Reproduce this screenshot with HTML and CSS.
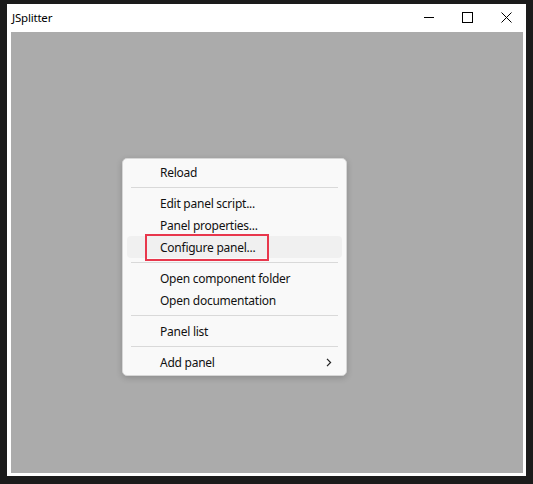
FILE: index.html
```html
<!DOCTYPE html>
<html lang="en">

<head>
    <meta charset="UTF-8">
    <meta name="viewport" content="width=device-width, initial-scale=1.0">
    <title>JSplitter</title>
    <link rel="stylesheet" href="styles.css">
</head>

<body>
    <div class="window">
        <div class="titlebar">
            <span class="title">JSplitter</span>
            <div class="controls">
                <div class="ctl">
                    <svg width="10" height="10" viewBox="0 0 10 10"><path d="M0 5.5h10" stroke="#000" stroke-width="1"/></svg>
                </div>
                <div class="ctl">
                    <svg width="11" height="11" viewBox="0 0 11 11"><rect x="0.5" y="0.5" width="10" height="10" fill="none" stroke="#000" stroke-width="1"/></svg>
                </div>
                <div class="ctl">
                    <svg width="11" height="11" viewBox="0 0 11 11"><path d="M0.5 0.5l10 10M10.5 0.5l-10 10" stroke="#000" stroke-width="1"/></svg>
                </div>
            </div>
        </div>

        <div class="client">
            <div class="menu">
                <div class="item">Reload</div>
                <div class="sep"></div>
                <div class="item">Edit panel script...</div>
                <div class="item">Panel properties...</div>
                <div class="item hover">
                    Configure panel...
                    <span class="mark"></span>
                </div>
                <div class="sep"></div>
                <div class="item">Open component folder</div>
                <div class="item">Open documentation</div>
                <div class="sep"></div>
                <div class="item">Panel list</div>
                <div class="sep"></div>
                <div class="item sub">
                    Add panel
                    <svg class="arrow" width="6" height="9" viewBox="0 0 6 9"><path d="M1 0.8l3.6 3.7L1 8.2" fill="none" stroke="#222" stroke-width="1.2"/></svg>
                </div>
            </div>
        </div>
    </div>
</body>

</html>
```

FILE: styles.css
```css
* {
    margin: 0;
    padding: 0;
    box-sizing: border-box;
}

body {
    font-family: 'Noto Sans', 'Open Sans', sans-serif;
    background-color: #1b1b1b;
    height: 484px;
    overflow: hidden;
}

.window {
    margin: 4px 0 0 7px;
    width: 519px;
    height: 472px;
    background-color: #fff;
    display: flex;
    flex-direction: column;
}

.titlebar {
    height: 28px;
    display: flex;
    align-items: center;
    justify-content: space-between;
}

.title {
    font-size: 11.5px;
    letter-spacing: -0.2px;
    color: #000;
    padding-left: 5px;
    padding-bottom: 2px;
}

.controls {
    display: flex;
    height: 100%;
}

.ctl {
    width: 39px;
    display: flex;
    align-items: center;
    justify-content: center;
    padding-bottom: 2px;
}

.client {
    flex: 1;
    margin: 0 3px 3px 4px;
    background-color: #ababab;
    position: relative;
}

.menu {
    position: absolute;
    left: 111px;
    top: 126px;
    width: 225px;
    padding: 2px 4px;
    background-color: #f9f9f9;
    border: 1px solid #d6d6d6;
    border-radius: 5px;
    box-shadow: 0 2px 6px rgba(0, 0, 0, 0.18);
}

.item {
    position: relative;
    height: 22px;
    display: flex;
    align-items: center;
    padding-left: 33px;
    font-size: 12px;
    letter-spacing: -0.25px;
    color: #111;
    border-radius: 4px;
}

.item.hover {
    background-color: #f0f0f0;
}

.mark {
    position: absolute;
    left: 18px;
    top: -2px;
    width: 124px;
    height: 27px;
    border: 2px solid #e8374c;
}

.sep {
    height: 9px;
    margin: 0 4px;
    display: flex;
    align-items: center;
}

.sep::before {
    content: '';
    flex: 1;
    height: 1px;
    background-color: #d9d9d9;
}

.arrow {
    margin-left: auto;
    margin-right: 10px;
}
```
